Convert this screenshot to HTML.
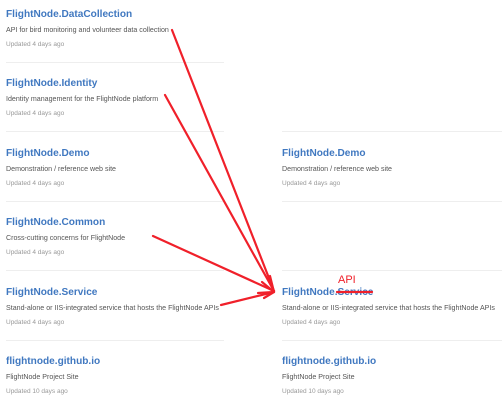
<!DOCTYPE html>
<html><head><style>
body{margin:0;width:502px;height:403px;background:#fff;position:relative;overflow:hidden;font-family:"Liberation Sans",Arial,sans-serif}
.t{position:absolute;font-size:10.1px;font-weight:bold;color:#4078c0;line-height:14px;white-space:nowrap}
.d{position:absolute;font-size:7.1px;color:#555;line-height:10px;white-space:nowrap}
.u{position:absolute;font-size:6.5px;color:#999;line-height:10px;white-space:nowrap}
.s{position:absolute;height:1px;background:#eee}
</style></head><body>
<div class="t" style="left:6px;top:8px">FlightNode.DataCollection</div>
<div class="d" style="left:6px;top:25px">API for bird monitoring and volunteer data collection</div>
<div class="u" style="left:6px;top:40px">Updated 4 days ago</div>
<div class="s" style="left:6px;top:62px;width:218px"></div>

<div class="t" style="left:6px;top:77px">FlightNode.Identity</div>
<div class="d" style="left:6px;top:94px">Identity management for the FlightNode platform</div>
<div class="u" style="left:6px;top:109px">Updated 4 days ago</div>
<div class="s" style="left:6px;top:131px;width:218px"></div>

<div class="t" style="left:6px;top:147px">FlightNode.Demo</div>
<div class="d" style="left:6px;top:164px">Demonstration / reference web site</div>
<div class="u" style="left:6px;top:179px">Updated 4 days ago</div>
<div class="s" style="left:6px;top:201px;width:218px"></div>

<div class="t" style="left:6px;top:216px">FlightNode.Common</div>
<div class="d" style="left:6px;top:233px">Cross-cutting concerns for FlightNode</div>
<div class="u" style="left:6px;top:248px">Updated 4 days ago</div>
<div class="s" style="left:6px;top:270px;width:218px"></div>

<div class="t" style="left:6px;top:286px">FlightNode.Service</div>
<div class="d" style="left:6px;top:303px">Stand-alone or IIS-integrated service that hosts the FlightNode APIs</div>
<div class="u" style="left:6px;top:318px">Updated 4 days ago</div>
<div class="s" style="left:6px;top:340px;width:218px"></div>

<div class="t" style="left:6px;top:355px">flightnode.github.io</div>
<div class="d" style="left:6px;top:372px">FlightNode Project Site</div>
<div class="u" style="left:6px;top:387px">Updated 10 days ago</div>

<div class="s" style="left:282px;top:131px;width:220px"></div>
<div class="t" style="left:282px;top:147px">FlightNode.Demo</div>
<div class="d" style="left:282px;top:164px">Demonstration / reference web site</div>
<div class="u" style="left:282px;top:179px">Updated 4 days ago</div>
<div class="s" style="left:282px;top:201px;width:220px"></div>
<div class="s" style="left:282px;top:270px;width:220px"></div>
<div class="t" style="left:282px;top:286px">FlightNode.Service</div>
<div class="d" style="left:282px;top:303px">Stand-alone or IIS-integrated service that hosts the FlightNode APIs</div>
<div class="u" style="left:282px;top:318px">Updated 4 days ago</div>
<div class="s" style="left:282px;top:340px;width:220px"></div>
<div class="t" style="left:282px;top:355px">flightnode.github.io</div>
<div class="d" style="left:282px;top:372px">FlightNode Project Site</div>
<div class="u" style="left:282px;top:387px">Updated 10 days ago</div>

<div style="position:absolute;left:338px;top:274px;font-size:11px;color:#f0202a;line-height:12px">API</div>
<svg width="502" height="403" style="position:absolute;left:0;top:0" fill="none" stroke="#f0202a" stroke-width="2.2" stroke-linecap="round">
<path d="M337 292 L372 292"/>
<path d="M172 30 L274 291"/>
<path d="M165 95 L274 291"/>
<path d="M153 236 L274 291"/>
<path d="M221 305 L274 292"/>
<path d="M274 292 L262 282 M274 292 L270 276 M274 292 L258 293 M274 292 L264 298"/>
</svg>
</body></html>
